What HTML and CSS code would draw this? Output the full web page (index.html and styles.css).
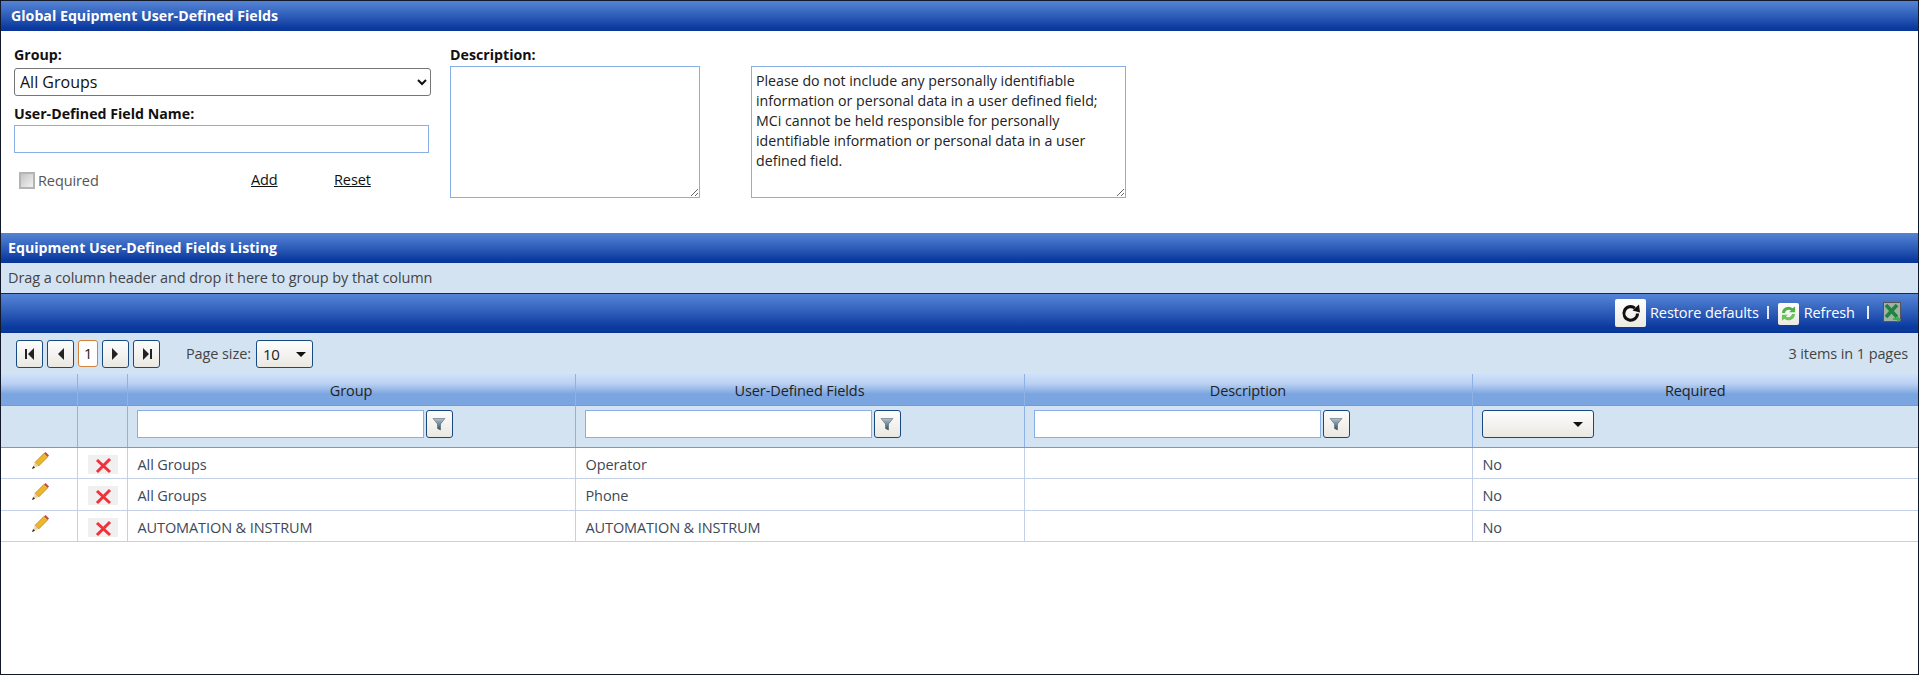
FILE: index.html
```html
<!DOCTYPE html>
<html lang="en">
<head>
  <meta charset="UTF-8">
  <meta name="viewport" content="width=device-width, initial-scale=1.0">
  <title>Global Equipment User-Defined Fields</title>
  <link rel="stylesheet" href="styles.css">
</head>
<body>
<svg class="sprites" width="0" height="0">
  <defs>
    <linearGradient id="funnelFill" x1="0" y1="0" x2="0" y2="1">
      <stop offset="0" stop-color="#b4c2cc"/>
      <stop offset="1" stop-color="#2f4c60"/>
    </linearGradient>
    <symbol id="iconPencil" viewBox="0 0 17 17">
      <path d="M3 10.4 12.2 1.2 15.8 4.8 6.6 14Z" fill="#eeb62c" stroke="#a97a12" stroke-width=".7"/>
      <path d="M12.2 1.2 13.6 0 17 3.4 15.8 4.8Z" fill="#c8434f"/>
      <path d="M3 10.4 6.6 14 0 17Z" fill="#e9d6a8"/>
      <path d="M1.2 14 3 15.8 0 17Z" fill="#222"/>
    </symbol>
    <symbol id="iconDelete" viewBox="0 0 30 19">
      <rect width="30" height="19" fill="#f1f0ef"/>
      <path d="M9 5 22 17M22 4 9 17" stroke="#f0303a" stroke-width="3" fill="none"/>
    </symbol>
    <symbol id="iconFunnel" viewBox="0 0 14 14">
      <path d="M1 1.5h12L8.5 7V13l-3-1.5V7Z" fill="url(#funnelFill)" stroke="#3f5566" stroke-width=".5"/>
    </symbol>
  </defs>
</svg>

<div class="page">
  <div class="bar title-bar">Global Equipment User-Defined Fields</div>

  <form class="udf-form">
    <div class="field-col">
      <label class="field-label label-group">Group:</label>
      <select class="group-select"><option>All Groups</option></select>
      <label class="field-label label-name">User-Defined Field Name:</label>
      <input class="text-box name-box" type="text">
      <div class="form-actions">
        <label class="required-check"><input type="checkbox" disabled> Required</label>
        <a class="action-add" href="#">Add</a>
        <a class="action-reset" href="#">Reset</a>
      </div>
    </div>
    <div class="desc-col">
      <label class="field-label label-desc">Description:</label>
      <textarea class="text-box desc-box"></textarea>
    </div>
    <textarea class="text-box note-box" readonly>Please do not include any personally identifiable information or personal data in a user defined field; MCi cannot be held responsible for personally identifiable information or personal data in a user defined field.</textarea>
  </form>

  <div class="bar listing-bar">Equipment User-Defined Fields Listing</div>
  <div class="group-panel">Drag a column header and drop it here to group by that column</div>

  <div class="toolbar">
    <button class="restore-btn" type="button" aria-label="Restore defaults">
      <svg width="22" height="22" viewBox="0 0 22 22"><path d="M17.5 11.5a6.8 6.8 0 1 1-2.6-5.4" fill="none" stroke="#111" stroke-width="3"/><path d="M12.5 8.5 20 10.5 19 2.5Z" fill="#111"/></svg>
    </button>
    <span class="tool-link">Restore defaults</span>
    <span class="tool-sep sep-first"></span>
    <button class="refresh-btn" type="button" aria-label="Refresh">
      <svg width="19" height="19" viewBox="0 0 16 16"><path d="M2.5 7.5A5.5 5.5 0 0 1 11.5 3.6L13.5 2v5H8.6l1.6-1.6A3.4 3.4 0 0 0 5 7.5Z" fill="#4fb248"/><path d="M13.5 8.5A5.5 5.5 0 0 1 4.5 12.4L2.5 14V9h4.9l-1.6 1.6A3.4 3.4 0 0 0 11 8.5Z" fill="#6cc35c"/></svg>
    </button>
    <span class="tool-link">Refresh</span>
    <span class="tool-sep sep-second"></span>
    <svg class="excel-icon" width="18" height="20" viewBox="0 0 18 20">
      <rect x=".5" y=".5" width="17" height="19" fill="#a3b0a6" stroke="#555"/>
      <path d="M3 3 14 15M14 3 3 15" stroke="#1f8440" stroke-width="3.6"/>
      <path d="M10 16h4v-2l4 3.5-4 2.5v-2h-4Z" fill="#36b34a"/>
    </svg>
  </div>

  <div class="pager">
    <button class="page-btn" type="button" aria-label="First"><svg width="10" height="12" viewBox="0 0 10 12"><rect x="0" y="1" width="2" height="10" fill="#222"/><path d="M9 0v12L3 6Z" fill="#222"/></svg></button>
    <button class="page-btn" type="button" aria-label="Previous"><svg width="7" height="12" viewBox="0 0 7 12"><path d="M7 0v12L1 6Z" fill="#222"/></svg></button>
    <span class="page-current">1</span>
    <button class="page-btn btn-next" type="button" aria-label="Next"><svg width="7" height="12" viewBox="0 0 7 12"><path d="M0 0v12l6-6Z" fill="#222"/></svg></button>
    <button class="page-btn" type="button" aria-label="Last"><svg width="10" height="12" viewBox="0 0 10 12"><path d="M1 0v12l6-6Z" fill="#222"/><rect x="8" y="1" width="2" height="10" fill="#222"/></svg></button>
    <span class="page-size-label">Page size:</span>
    <span class="combo size-combo">10<i class="combo-arrow"></i></span>
    <span class="page-info">3 items in 1 pages</span>
  </div>

  <table class="grid">
    <colgroup>
      <col class="col-edit"><col class="col-del"><col class="col-group"><col class="col-field"><col class="col-desc"><col>
    </colgroup>
    <thead>
      <tr class="head-row">
        <th></th><th></th><th>Group</th><th>User-Defined Fields</th><th>Description</th><th>Required</th>
      </tr>
      <tr class="filter-row">
        <td></td><td></td>
        <td><div class="filter-cell"><input class="text-box filter-box" type="text"><button class="filter-btn" type="button" aria-label="Filter"><svg width="14" height="14"><use href="#iconFunnel"/></svg></button></div></td>
        <td><div class="filter-cell"><input class="text-box filter-box" type="text"><button class="filter-btn" type="button" aria-label="Filter"><svg width="14" height="14"><use href="#iconFunnel"/></svg></button></div></td>
        <td><div class="filter-cell"><input class="text-box filter-box" type="text"><button class="filter-btn" type="button" aria-label="Filter"><svg width="14" height="14"><use href="#iconFunnel"/></svg></button></div></td>
        <td><div class="filter-cell"><span class="combo required-combo"><i class="combo-arrow"></i></span></div></td>
      </tr>
    </thead>
    <tbody>
      <tr>
        <td class="icon-cell"><svg class="pencil" width="17" height="17"><use href="#iconPencil"/></svg></td>
        <td class="icon-cell"><svg class="del" width="30" height="19"><use href="#iconDelete"/></svg></td>
        <td>All Groups</td><td>Operator</td><td></td><td>No</td>
      </tr>
      <tr>
        <td class="icon-cell"><svg class="pencil" width="17" height="17"><use href="#iconPencil"/></svg></td>
        <td class="icon-cell"><svg class="del" width="30" height="19"><use href="#iconDelete"/></svg></td>
        <td>All Groups</td><td>Phone</td><td></td><td>No</td>
      </tr>
      <tr>
        <td class="icon-cell"><svg class="pencil" width="17" height="17"><use href="#iconPencil"/></svg></td>
        <td class="icon-cell"><svg class="del" width="30" height="19"><use href="#iconDelete"/></svg></td>
        <td>AUTOMATION &amp; INSTRUM</td><td>AUTOMATION &amp; INSTRUM</td><td></td><td>No</td>
      </tr>
    </tbody>
  </table>
</div>
</body>
</html>
```

FILE: styles.css
```css
* { box-sizing: border-box; }
html, body { margin: 0; padding: 0; }
body {
  font-family: "Open Sans", "Noto Sans", Arial, sans-serif;
  font-size: 14.5px;
  letter-spacing: -0.1px;
  color: #222;
  background: #fff;
  overflow: hidden;
}
.sprites { position: absolute; }
.page {
  height: 675px;
  border: 1px solid #10182a;
  display: flex;
  flex-direction: column;
  overflow: hidden;
}

/* blue header bars */
.bar {
  height: 30px;
  flex: none;
  color: #fff;
  font-weight: 700;
  font-size: 14.2px;
  letter-spacing: 0;
  line-height: 30px;
  background: linear-gradient(#5584d6 0%, #3a69c2 35%, #0b3a9f 90%, #0a3596 100%);
}
.title-bar { padding-left: 10px; }
.listing-bar { padding-left: 7px; }

/* top form */
.udf-form {
  height: 202px;
  flex: none;
  display: flex;
  align-items: flex-start;
}
.field-col { width: 449px; padding-left: 13px; flex: none; }
.field-label {
  display: block;
  font-weight: 700;
  font-size: 14.2px;
  letter-spacing: 0;
  color: #111;
  line-height: 18px;
}
.label-group { margin-top: 15px; margin-bottom: 4px; }
.label-name { margin-top: 9px; margin-bottom: 2px; }
.group-select {
  display: block;
  width: 417px;
  height: 28px;
  padding-left: 1px;
  font-family: inherit;
  font-size: 16px;
  color: #111;
  background: #fff;
  border: 1px solid #767676;
  border-radius: 3px;
}
.text-box {
  border: 1px solid #8aaee6;
  background: #fff;
  outline: none;
  display: block;
  font-family: inherit;
}
.name-box { width: 415px; height: 28px; }
.form-actions {
  display: flex;
  align-items: center;
  height: 30px;
  margin-top: 12px;
  padding-left: 5px;
}
.required-check {
  display: flex;
  align-items: center;
  gap: 3px;
  width: 232px;
  color: #555;
}
.required-check input {
  appearance: none;
  width: 16px;
  height: 17px;
  margin: 0;
  border: 2px solid #b4b4b4;
  background: linear-gradient(135deg, #c4c4c4, #f2f2f2);
}
.form-actions a {
  color: #111;
  margin-top: -2px;
}
.action-add { width: 83px; }

.desc-col { width: 301px; flex: none; }
.label-desc { margin-top: 15px; margin-bottom: 2px; }
.desc-box { width: 250px; height: 132px; resize: both; }
.note-box {
  width: 375px;
  height: 132px;
  margin-top: 35px;
  padding: 4px 16px 4px 4px;
  font-size: 14.2px;
  letter-spacing: 0;
  line-height: 20px;
  color: #222;
  resize: both;
}

/* grouping panel and toolbar */
.group-panel {
  height: 30px;
  flex: none;
  padding-left: 7px;
  line-height: 30px;
  color: #444;
  background: #d4e3f2;
}
.toolbar {
  height: 40px;
  flex: none;
  display: flex;
  align-items: center;
  padding-left: 1614px;
  color: #fff;
  border-top: 1px solid #07296f;
  border-bottom: 2px solid #0a3596;
  background: linear-gradient(#5584d6 0%, #3a69c2 35%, #0b3a9f 90%);
  box-shadow: 0 1px 0 #9dbbea;
}
.restore-btn {
  width: 31px;
  height: 28px;
  padding: 0;
  margin-right: 4px;
  display: flex;
  align-items: center;
  justify-content: center;
  border: 0;
  border-radius: 2px;
  background: linear-gradient(#fff, #ece9e2);
}
.refresh-btn {
  width: 21px;
  height: 22px;
  padding: 0;
  margin-right: 5px;
  margin-top: 2px;
  display: flex;
  align-items: center;
  justify-content: center;
  border: 0;
  border-radius: 2px;
  background: linear-gradient(#fff, #ece9e2);
}
.tool-link { white-space: nowrap; }
.tool-sep { width: 2px; height: 13px; background: #e3ecfa; }
.sep-first { margin: 0 9px 0 8px; }
.sep-second { margin: 0 14px 0 12px; }
.excel-icon { margin-top: -2px; }

/* pager */
.pager {
  height: 41px;
  flex: none;
  display: flex;
  align-items: center;
  padding: 0 10px 0 15px;
  gap: 4px;
  color: #444;
  background: #d4e3f2;
}
.page-btn,
.filter-btn,
.combo {
  border: 1px solid #164a80;
  border-radius: 3px;
  background: linear-gradient(#fdfdfd, #ebe8e2);
}
.page-btn {
  width: 27px;
  height: 28px;
  padding: 0;
  display: flex;
  align-items: center;
  justify-content: center;
}
.page-current {
  width: 20px;
  height: 27px;
  text-align: center;
  line-height: 25px;
  color: #222;
  background: #fff;
  border: 1px solid #d2823a;
  border-radius: 3px;
}
.page-size-label { margin-left: 22px; margin-right: 1px; }
.combo {
  display: inline-flex;
  align-items: center;
  height: 28px;
  position: relative;
  color: #222;
}
.combo-arrow {
  position: absolute;
  top: 11px;
  border-left: 5px solid transparent;
  border-right: 5px solid transparent;
  border-top: 5px solid #111;
}
.size-combo { width: 57px; padding-left: 6px; font-size: 15px; }
.size-combo .combo-arrow { right: 6px; }
.page-info { margin-left: auto; }

/* data grid */
.grid {
  width: 100%;
  table-layout: fixed;
  border-collapse: collapse;
  color: #3c4858;
}
.col-edit { width: 76px; }
.col-del { width: 50px; }
.col-group { width: 448px; }
.col-field { width: 449px; }
.col-desc { width: 448px; }
.grid th {
  height: 31px;
  padding: 0;
  font-weight: 400;
  color: #222;
  vertical-align: bottom;
  line-height: 29px;
  border-left: 1px solid #8fb2e6;
  background: linear-gradient(#cfe0f9 0%, #bcd2f3 30%, #7ba5e0 65%, #7ba5e0 100%);
}
.grid th:first-child, .grid td:first-child { border-left: 0; }
.filter-row td {
  height: 42px;
  padding: 0;
  background: #d4e3f2;
  border-left: 1px solid #8fb2e6;
  border-top: 1px solid #6f9bd8;
  border-bottom: 1px solid #6f9bd8;
}
.filter-cell {
  display: flex;
  align-items: center;
  gap: 2px;
  padding: 0 0 4px 9px;
}
.filter-box { width: 287px; height: 28px; }
.filter-btn {
  width: 27px;
  height: 28px;
  padding: 0;
  display: flex;
  align-items: center;
  justify-content: center;
}
.required-combo { width: 112px; }
.required-combo .combo-arrow { right: 10px; }
.grid tbody td {
  height: 31.5px;
  padding: 3px 0 0 10px;
  border-left: 1px solid #c3d0e6;
  border-bottom: 1px solid #c3d0e6;
}
.grid tbody .icon-cell { padding: 0; }
.icon-cell svg { display: block; }
.pencil { margin: -5px 0 0 31px; }
.del { margin: 3px 0 0 10px; }
```
